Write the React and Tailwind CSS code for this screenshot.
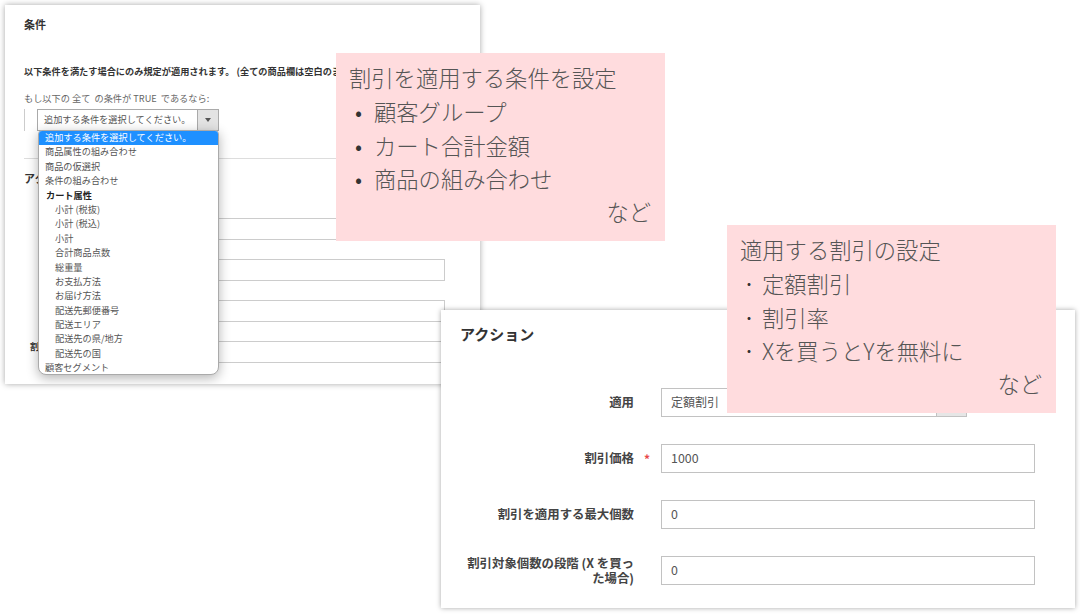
import React from "react";

const FONT = "[font-family:'Noto_Sans_CJK_JP','Liberation_Sans',sans-serif]";

const conditionOptions = [
  { label: "商品属性の組み合わせ" },
  { label: "商品の仮選択" },
  { label: "条件の組み合わせ" },
  { label: "カート属性", group: true },
  { label: "小計 (税抜)", sub: true },
  { label: "小計 (税込)", sub: true },
  { label: "小計", sub: true },
  { label: "合計商品点数", sub: true },
  { label: "総重量", sub: true },
  { label: "お支払方法", sub: true },
  { label: "お届け方法", sub: true },
  { label: "配送先郵便番号", sub: true },
  { label: "配送エリア", sub: true },
  { label: "配送先の県/地方", sub: true },
  { label: "配送先の国", sub: true },
  { label: "顧客セグメント" },
];

function optionClass(option) {
  if (option.group) return "pl-[7px] font-bold text-[#222]";
  if (option.sub) return "pl-[16px] text-[#555]";
  return "pl-[6px] text-[#555]";
}

function ConditionDropdown() {
  return (
    <div className="absolute left-[33px] top-[125px] w-[181px] h-[245px] overflow-hidden bg-white border border-[#aaa] rounded-b-lg rounded-t-[4px] shadow-[0_3px_12px_rgba(0,0,0,0.3)] text-[9.2px]">
      <div className="h-[14.4px] pl-[6px] bg-[#1e90ff] text-white leading-[13px] whitespace-nowrap">追加する条件を選択してください。</div>
      {conditionOptions.map((option) => (
        <div key={option.label} className={`h-[14.4px] leading-[13px] whitespace-nowrap ${optionClass(option)}`}>
          {option.label}
        </div>
      ))}
    </div>
  );
}

function ConditionsPanel() {
  return (
    <div className="absolute left-[5px] top-[5px] w-[475px] h-[379px] overflow-hidden bg-white shadow-[0_0_6px_rgba(0,0,0,0.35)] text-[#555]">
      <h2 className="ml-[19px] mt-[12px] text-[11px] leading-[14px] font-bold text-[#333]">条件</h2>
      <p className="ml-[19px] mt-[33px] whitespace-nowrap text-[9.2px] leading-[14px] font-bold text-[#333]">
        以下条件を満たす場合にのみ規定が適用されます。 (全ての商品欄は空白のままにしてください)
      </p>
      <p className="ml-[19px] mt-[13px] text-[9.2px] leading-[14px] whitespace-pre text-[#666]">
        もし以下の 全て  の条件が TRUE  であるなら:
      </p>
      <div className="ml-[19px] mt-[4px] h-[22px] w-[200px] border-l border-[#ccc] pl-[12px]">
        <div className="flex h-[22px] w-[182px] border border-[#aaa] bg-white text-[9.2px] leading-[18px]">
          <span className="flex-1 pl-[6px] whitespace-nowrap">追加する条件を選択してください。</span>
          <span className="flex w-[21px] shrink-0 items-center justify-center border-l border-[#aaa] bg-[#e3e3e3]">
            <span className="h-0 w-0 border-x-[3px] border-t-[4px] border-x-transparent border-t-[#555]" />
          </span>
        </div>
      </div>
      <div className="ml-[19px] mt-[27px] border-t border-[#ddd] pt-[11px]">
        <h2 className="text-[11px] leading-[16px] font-bold text-[#333]">アクション</h2>
      </div>
      <div className="ml-[145px] mt-[32px] w-[295px] h-[22px] border border-[#ccc]" />
      <div className="ml-[145px] mt-[19px] w-[295px] h-[22px] border border-[#ccc]" />
      <div className="ml-[145px] mt-[19px] w-[295px] h-[22px] border border-[#ccc]" />
      <div className="ml-[25px] mt-[19px] flex items-start h-[22px]">
        <span className="w-[120px] text-[9.2px] leading-[10px] font-bold text-[#333]">割引</span>
        <div className="w-[295px] h-[22px] border border-[#ccc]" />
      </div>
      <ConditionDropdown />
    </div>
  );
}

function Callout({ className, title, items, bullet, dot }) {
  return (
    <div className={`absolute w-[329px] h-[188px] bg-[#ffdcde] pl-[13px] pt-[8px] text-[22.3px] leading-[33.4px] font-light text-[#555] ${className}`}>
      <div>{title}</div>
      <div className="pt-px -mb-px">
        {items.map((item) => (
          <div key={item} className="flex items-center">
            <span className={bullet}>{dot ? "・" : "•"}</span>
            <span>{item}</span>
          </div>
        ))}
      </div>
      <div className="pr-[14px] text-right">など</div>
    </div>
  );
}

function Field({ label, required, children }) {
  return (
    <div className="flex items-center h-[29px] mb-[27px]">
      <div className="relative w-[193px] shrink-0 text-right text-[12.4px] leading-[15px] font-bold text-[#444]">
        {label}
        {required && (
          <span className="absolute left-[203px] top-0 text-[12px] font-bold text-[#e8474a]">*</span>
        )}
      </div>
      <div className="ml-[27px]">{children}</div>
    </div>
  );
}

function TextBox({ value }) {
  return (
    <div className="w-[374px] h-[29px] border border-[#c2c2c2] bg-white pl-[9px] text-[12.4px] leading-[26px] text-[#555]">
      {value}
    </div>
  );
}

function ActionsPanel() {
  return (
    <div className="absolute left-[441px] top-[310px] w-[634px] h-[298px] bg-white shadow-[0_0_5px_rgba(0,0,0,0.35)]">
      <h2 className="ml-[19px] mt-[14px] text-[15px] leading-[20px] font-bold text-[#333]">アクション</h2>
      <div className="mt-[44px]">
        <Field label="適用">
          <div className="flex w-[306px] h-[29px] border border-[#c2c2c2] bg-white text-[12px] leading-[26px] text-[#555]">
            <span className="flex-1 pl-[9px]">定額割引</span>
            <span className="w-[30px] border-l border-[#c2c2c2] bg-[#e6e6e6]" />
          </div>
        </Field>
        <Field label="割引価格" required>
          <TextBox value="1000" />
        </Field>
        <Field label="割引を適用する最大個数">
          <TextBox value="0" />
        </Field>
        <Field
          label={
            <>
              割引対象個数の段階 (X を買っ
              <br />
              た場合)
            </>
          }
        >
          <TextBox value="0" />
        </Field>
      </div>
    </div>
  );
}

export default function App() {
  return (
    <div className={`relative w-[1080px] h-[614px] overflow-hidden bg-white ${FONT}`}>
      <ConditionsPanel />
      <ActionsPanel />
      <Callout
        className="left-[336px] top-[53px]"
        title="割引を適用する条件を設定"
        items={["顧客グループ", "カート合計金額", "商品の組み合わせ"]}
        bullet="w-[25px] pl-[6px] text-[#333]"
      />
      <Callout
        className="left-[727px] top-[225px]"
        title="適用する割引の設定"
        items={["定額割引", "割引率", "Xを買うとYを無料に"]}
        bullet="w-[22px] text-[16px] pl-[1px] text-[#333]"
        dot
      />
    </div>
  );
}
